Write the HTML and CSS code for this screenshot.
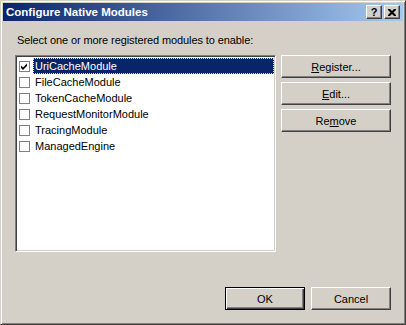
FILE: index.html
```html
<!DOCTYPE html>
<html lang="en">
<head>
  <meta charset="UTF-8" />
  <title>Configure Native Modules</title>
  <link rel="stylesheet" href="styles.css">
</head>
<body>

  <div class="window">
    <div class="titlebar">
      <span class="title">Configure Native Modules</span>
      <div class="caption-buttons">
        <button class="cap-btn help">?</button>
        <button class="cap-btn close">
          <svg width="8" height="7" viewBox="0 0 8 7">
            <path d="M0 0h2l2 2 2-2h2v1l-2.5 2.5L8 6v1H6L4 5 2 7H0V6l2.5-2.5L0 1z" fill="#000"/>
          </svg>
        </button>
      </div>
    </div>

    <div class="content">
      <p class="prompt">Select one or more registered modules to enable:</p>

      <div class="main">
        <ul class="module-list">
          <li class="item">
            <span class="check">
              <svg width="9" height="9" viewBox="0 0 9 9">
                <path d="M1 3.5l2 2 4-4v2.5l-4 4-2-2z" fill="#000"/>
              </svg>
            </span>
            <span class="name selected">UriCacheModule</span>
          </li>
          <li class="item"><span class="check"></span><span class="name">FileCacheModule</span></li>
          <li class="item"><span class="check"></span><span class="name">TokenCacheModule</span></li>
          <li class="item"><span class="check"></span><span class="name">RequestMonitorModule</span></li>
          <li class="item"><span class="check"></span><span class="name">TracingModule</span></li>
          <li class="item"><span class="check"></span><span class="name">ManagedEngine</span></li>
        </ul>

        <div class="side-buttons">
          <button class="btn"><u>R</u>egister...</button>
          <button class="btn"><u>E</u>dit...</button>
          <button class="btn">Re<u>m</u>ove</button>
        </div>
      </div>

      <div class="footer">
        <button class="btn default">OK</button>
        <button class="btn">Cancel</button>
      </div>
    </div>
  </div>

</body>
</html>
```

FILE: styles.css
```css
body {
  margin: 0;
  background: #d4d0c8;
  font-family: 'Liberation Sans', Arial, sans-serif;
  font-size: 11px;
  color: #000;
}

.window {
  width: 406px;
  height: 325px;
  box-sizing: border-box;
  display: flex;
  flex-direction: column;
  padding: 2px;
  background: #d4d0c8;
  border: 1px solid;
  border-color: #d4d0c8 #404040 #404040 #d4d0c8;
  box-shadow: inset 1px 1px #fff, inset -1px -1px #808080;
}

.titlebar {
  height: 18px;
  display: flex;
  align-items: center;
  justify-content: space-between;
  padding: 0 3px 0 3px;
  background: linear-gradient(to right, #0a246a, #a6caf0);
}

.title {
  color: #fff;
  font-weight: bold;
  font-size: 11.5px;
}

.caption-buttons {
  display: flex;
  gap: 2px;
}

.cap-btn {
  width: 16px;
  height: 14px;
  padding: 0;
  display: flex;
  align-items: center;
  justify-content: center;
  background: #d4d0c8;
  border: 1px solid;
  border-color: #fff #404040 #404040 #fff;
  box-shadow: inset -1px -1px #808080;
  font-family: 'Liberation Sans', Arial, sans-serif;
  font-weight: bold;
  font-size: 11px;
  color: #000;
}

.content {
  flex: 1;
  display: flex;
  flex-direction: column;
  padding: 13px 12px 12px;
}

.prompt {
  margin: 0 0 8px 2px;
  line-height: 13px;
  letter-spacing: -0.1px;
}

.main {
  display: flex;
  gap: 5px;
  align-items: flex-start;
}

.module-list {
  width: 261px;
  height: 197px;
  box-sizing: border-box;
  margin: 0;
  padding: 2px 1px 0 0;
  list-style: none;
  background: #fff;
  border: 1px solid;
  border-color: #808080 #fff #fff #808080;
  box-shadow: inset 1px 1px #404040, inset -1px -1px #d4d0c8;
}

.item {
  display: flex;
  align-items: center;
  height: 16px;
  padding-left: 3px;
}

.check {
  width: 11px;
  height: 11px;
  box-sizing: border-box;
  margin-right: 3px;
  border: 1px solid #808080;
  background: #fff;
  display: flex;
  align-items: center;
  justify-content: center;
}

.name {
  flex: 1;
  height: 16px;
  box-sizing: border-box;
  line-height: 14px;
  padding-left: 1px;
  border: 1px dotted transparent;
}

.name.selected {
  background: #0a246a;
  color: #fff;
  border-color: #f5db95;
}

.side-buttons {
  width: 110px;
  display: flex;
  flex-direction: column;
  gap: 4px;
}

.btn {
  height: 23px;
  padding: 0;
  background: #d4d0c8;
  border: 1px solid;
  border-color: #fff #404040 #404040 #fff;
  box-shadow: inset -1px -1px #808080;
  font-family: 'Liberation Sans', Arial, sans-serif;
  font-size: 11px;
  color: #000;
}

.footer {
  margin-top: auto;
  display: flex;
  justify-content: flex-end;
  gap: 6px;
}

.footer .btn {
  width: 80px;
}

.btn.default {
  border-color: #000;
  box-shadow: inset 1px 1px #fff, inset -1px -1px #404040, inset -2px -2px #808080;
}
```
